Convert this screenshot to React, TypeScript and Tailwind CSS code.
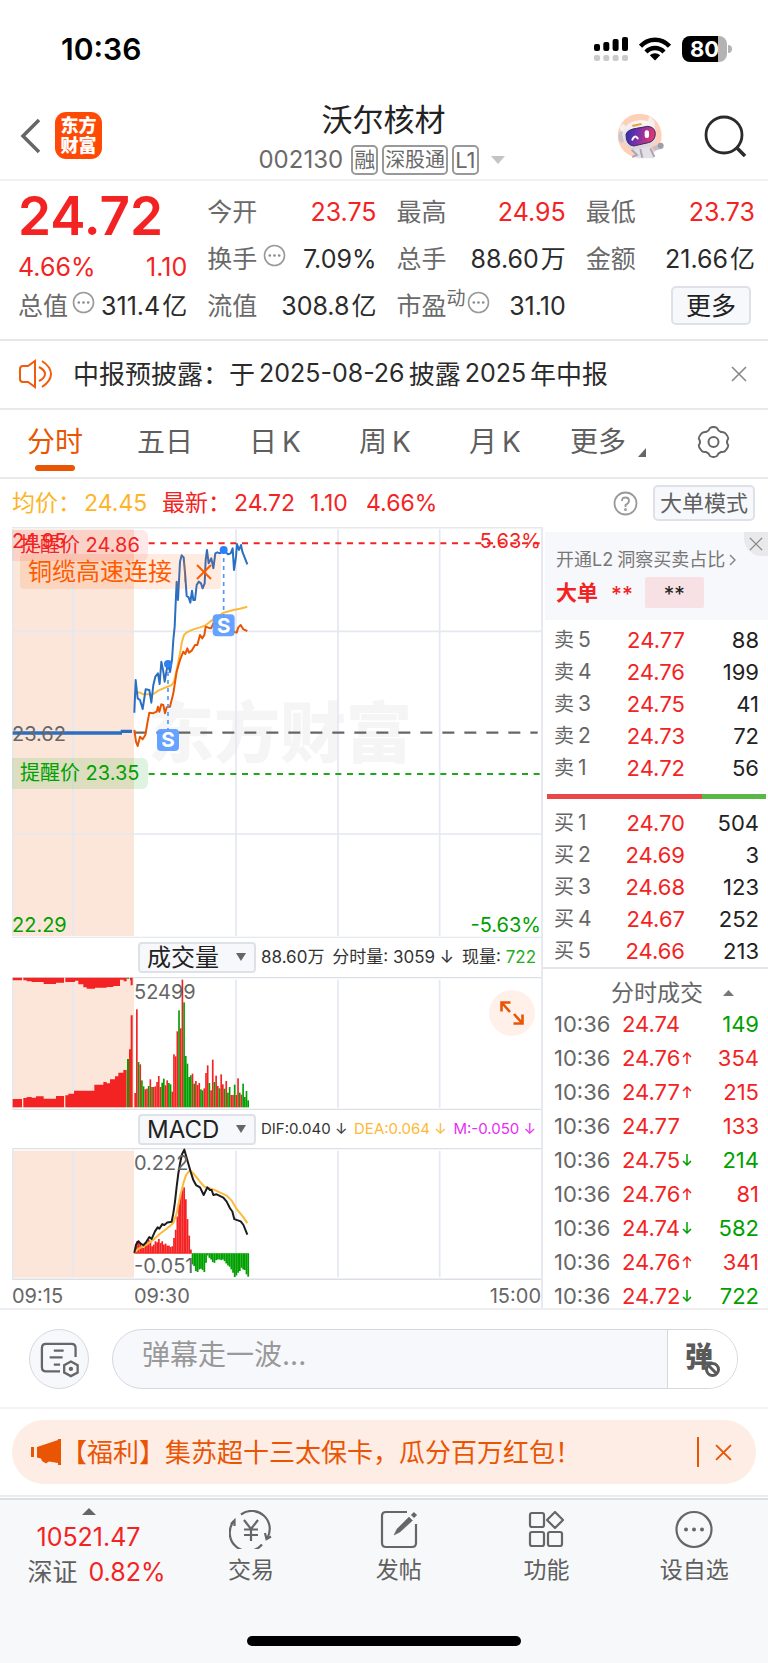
import React from "react";

const RED = "#f42323";
const GREEN = "#00a000";

function Dots() {
  return (
    <svg className="size-[23px] shrink-0" viewBox="0 0 23 23" fill="none" stroke="#9a9a9a" strokeWidth="1.6">
      <circle cx="11.5" cy="11.5" r="10" />
      <g fill="#8a8a8a" stroke="none">
        <circle cx="6.8" cy="11.5" r="1.3" />
        <circle cx="11.5" cy="11.5" r="1.3" />
        <circle cx="16.2" cy="11.5" r="1.3" />
      </g>
    </svg>
  );
}

function Cross({ className, width = 2 }: { className: string; width?: number }) {
  return (
    <svg className={className} viewBox="0 0 16 16" fill="none" stroke="currentColor" strokeWidth={width}>
      <path d="M1 1 15 15M15 1 1 15" />
    </svg>
  );
}

function StatusBar() {
  return (
    <div className="flex h-[86px] items-center justify-between pt-3 pr-[36px] pl-[61px]">
      <span className="text-[30px] leading-9 font-semibold text-black">10:36</span>
      <div className="flex items-center gap-[11px]">
        <svg className="h-[26px] w-[34px]" viewBox="0 0 34 26">
          <g fill="#000">
            <rect x="0" y="8" width="6" height="7" rx="2" />
            <rect x="9.3" y="6" width="6" height="9" rx="2" />
            <rect x="18.6" y="3" width="6" height="12" rx="2" />
            <rect x="28" y="1" width="6" height="14" rx="2" />
          </g>
          <g fill="#cbcbcb">
            <rect x="0" y="19" width="6" height="6" rx="2" />
            <rect x="9.3" y="19" width="6" height="6" rx="2" />
            <rect x="18.6" y="19" width="6" height="6" rx="2" />
            <rect x="28" y="19" width="6" height="6" rx="2" />
          </g>
        </svg>
        <svg className="h-[24px] w-[32px]" viewBox="0 0 32 24" fill="none" stroke="#000" strokeWidth="4.4">
          <path d="M1.5 9.2C9.5 0.5 22.5 0.5 30.5 9.2" />
          <path d="M7 15C12 9.7 20 9.7 25 15" />
          <path d="M10.8 18.3C13.8 15.5 18.2 15.5 21.2 18.3L16 23.5Z" fill="#000" stroke="none" />
        </svg>
        <div className="flex items-center gap-[1px]">
          <span className="flex h-[26px] w-[45px] items-center justify-center rounded-lg bg-linear-to-r from-black from-80% to-[#b3b3b3] to-80% text-[22px] leading-none font-bold text-white">
            80
          </span>
          <span className="h-2 w-1 rounded-r-full bg-[#b3b3b3]" />
        </div>
      </div>
    </div>
  );
}

function Robot() {
  return (
    <svg className="h-[46px] w-[48px]" viewBox="0 0 144 138">
      <defs>
        <linearGradient id="visor" x1="0" y1="0.3" x2="1" y2="0.5">
          <stop offset="0" stopColor="#2b2fb0" />
          <stop offset="0.45" stopColor="#8130a8" />
          <stop offset="1" stopColor="#ea3a6a" />
        </linearGradient>
        <linearGradient id="shell" x1="0" y1="0" x2="0" y2="1">
          <stop offset="0" stopColor="#fbf8f8" />
          <stop offset="1" stopColor="#d6d3da" />
        </linearGradient>
      </defs>
      <circle cx="68" cy="68" r="66" fill="#ffd0b8" />
      <path d="M48 104Q72 94 104 104L110 136H58Z" fill="#e3e1e7" />
      <path d="M44 110 60 126 46 132M70 108 76 134M100 106 112 132" stroke="#aaa6b2" strokeWidth="6" fill="none" />
      <path d="M104 102 130 92 138 106 112 114Z" fill="#c3c0ca" />
      <circle cx="131" cy="98" r="9" fill="#9f9cab" />
      <path d="M6 40 20 32 32 48 16 64ZM92 26 98 8 112 24 114 44Z" fill="#f4f0f0" />
      <ellipse cx="14" cy="72" rx="10" ry="17" fill="#c9c6ce" />
      <path d="M16 64Q22 28 66 22Q110 18 118 62Q122 92 94 102L50 110Q20 104 16 64Z" fill="url(#shell)" />
      <path d="M44 36 72 30 76 35 48 42Z" fill="#e9a24a" />
      <path d="M27 64Q31 50 58 46L92 40Q114 42 115 62Q114 85 94 89L50 99Q26 96 27 64Z" fill="url(#visor)" stroke="#40265e" strokeWidth="3" />
      <path d="M46 80Q53 64 62 76" fill="none" stroke="#fff" strokeWidth="6" strokeLinecap="round" />
      <rect x="83" y="52" width="13" height="23" rx="6" fill="#fff" />
    </svg>
  );
}

function Header() {
  return (
    <header className="flex h-[93px] items-center justify-between pr-[21px] pl-5">
      <div className="flex w-[160px] items-center gap-[14px] pt-[6px]">
        <button aria-label="返回">
          <svg className="h-[36px] w-[21px]" viewBox="0 0 21 36" fill="none" stroke="#666" strokeWidth="3.5">
            <path d="M19 2 3 18 19 34" />
          </svg>
        </button>
        <a href="#home" className="flex size-[47px] flex-col items-center justify-center rounded-[11px] bg-[#ff4a06] text-[18px] leading-5 font-black text-white">
          <span>东方</span>
          <span>财富</span>
        </a>
      </div>
      <div className="flex flex-col items-center gap-[7px] pt-[11px]">
        <h1 className="text-[31px] leading-9 text-[#222]">沃尔核材</h1>
        <div className="flex items-center gap-1 pr-1 text-[22px] leading-7 text-[#6a6a6a]">
          <span className="pr-1 text-[24px]">002130</span>
          <span className="rounded-[5px] border-2 border-[#999] px-px text-[21px] leading-[26px]">融</span>
          <span className="rounded-[5px] border-2 border-[#999] px-px text-[20px] leading-[26px]">深股通</span>
          <span className="rounded-[5px] border-2 border-[#999] px-px leading-[26px]">L1</span>
          <svg className="ml-2 h-2 w-[14px]" viewBox="0 0 14 8" fill="#c4c4c4">
            <path d="M0 0H14L7 8Z" />
          </svg>
        </div>
      </div>
      <div className="flex w-[160px] items-center justify-end gap-[38px] pt-[6px]">
        <button aria-label="助手">
          <Robot />
        </button>
        <button aria-label="搜索">
          <svg className="h-[42px] w-[44px]" viewBox="0 0 44 42" fill="none" stroke="#2b2b2b" strokeWidth="2.8">
            <circle cx="21" cy="20" r="18" />
            <path d="M33.5 32.5 42 41" strokeWidth="3.5" />
          </svg>
        </button>
      </div>
    </header>
  );
}

function Stat({ label, value, red, extra }: { label: string; value: string; red?: boolean; extra?: React.ReactNode }) {
  return (
    <div className="flex h-[47px] items-center justify-between">
      <dt className="flex items-center text-[25px] whitespace-nowrap text-[#6a6a6a]">
        {label}
        {extra}
      </dt>
      <dd className={`flex items-center gap-[2px] text-[25px] whitespace-nowrap ${red ? "text-[#f42323]" : "text-[#2b2b2b]"}`}>
        {value.replace(/[万亿]/, "")}
        {/[万亿]/.test(value) && <span>{value.slice(-1)}</span>}
      </dd>
    </div>
  );
}

function Quote() {
  return (
    <section className="grid grid-cols-4 gap-x-5 border-t-2 border-[#f1f1f1] pt-2 pr-[13px] pb-[9px] pl-[18px]">
      <div>
        <div className="h-[57px] text-[53px] leading-[55px] font-semibold text-[#f42323]">24.72</div>
        <div className="flex h-[37px] items-end justify-between text-[25px] leading-[32px] text-[#f42323]">
          <span>4.66%</span>
          <span>1.10</span>
        </div>
        <dl>
          <Stat label="总值" value="311.4亿" extra={<span className="ml-1 pb-2"><Dots /></span>} />
        </dl>
      </div>
      <dl>
        <Stat label="今开" value="23.75" red />
        <Stat label="换手" value="7.09%" extra={<span className="ml-[6px] pb-2"><Dots /></span>} />
        <Stat label="流值" value="308.8亿" />
      </dl>
      <dl>
        <Stat label="最高" value="24.95" red />
        <Stat label="总手" value="88.60万" />
        <Stat
          label="市盈"
          value="31.10"
          extra={
            <span className="flex items-center gap-px pb-2 text-[19px]">
              <span className="pb-2 leading-5">动</span>
              <Dots />
            </span>
          }
        />
      </dl>
      <div>
        <dl>
          <Stat label="最低" value="23.73" red />
          <Stat label="金额" value="21.66亿" />
        </dl>
        <div className="flex h-[45px] items-center justify-end pr-1">
          <button className="h-[39px] w-20 rounded-[5px] border-2 border-[#dfe1e8] bg-[#f7f8fb] text-[25px] leading-8 text-[#222]">更多</button>
        </div>
      </div>
    </section>
  );
}

function Notice() {
  return (
    <section className="flex h-[69px] items-center border-t-2 border-[#e6e6e6] pr-[21px] pb-px pl-[19px]">
      <svg className="h-[30px] w-[34px]" viewBox="0 0 34 30" fill="none" stroke="#f25a0c" strokeWidth="2">
        <path d="M16 2V28L9 23H4Q1 23 1 20V10Q1 7 4 7H9Z" />
        <path d="M20 8Q26 11 26 15T20 22M23 2Q32 8 32 15T23 28" />
      </svg>
      <p className="ml-[20px] flex flex-1 items-center gap-1 text-[26px] whitespace-nowrap text-[#2b2b2b]">
        <span>中报预披露：于</span>
        <span className="text-[25px]">2025-08-26</span>
        <span>披露</span>
        <span className="text-[25px]">2025</span>
        <span>年中报</span>
      </p>
      <button aria-label="关闭公告" className="text-[#888]">
        <Cross className="size-4" width={1.6} />
      </button>
    </section>
  );
}

function Tabs() {
  return (
    <nav className="grid h-[71px] grid-cols-[repeat(5,110fr)_116fr_94fr] items-center justify-items-center border-t-2 border-b-2 border-[#e9e9ed] pr-2 pb-[3px] text-[28px] text-[#5f5f5f]">
      <button className="relative text-[#ea5504]">
        分时
        <span className="absolute -bottom-[8px] left-2 h-[6px] w-10 rounded-full bg-[#ea5504]" />
      </button>
      <button>五日</button>
      <button className="flex items-center gap-[5px]">日<span>K</span></button>
      <button className="flex items-center gap-[5px]">周<span>K</span></button>
      <button className="flex items-center gap-[5px]">月<span>K</span></button>
      <button className="flex items-center gap-3">
        更多
        <svg className="mt-5 h-[9px] w-2" viewBox="0 0 8 9" fill="#666">
          <path d="M8 0V9H0Z" />
        </svg>
      </button>
      <button aria-label="设置">
        <svg className="h-[32px] w-[33px]" viewBox="0 0 33 32" fill="none" stroke="#666" strokeWidth="2" strokeLinejoin="round">
          <path d="M13 2Q16.500 0 20 2Q21 5 24 6Q27.500 5.500 29 8Q32 12 31 13Q29 16 31 19Q32 20 29 24Q27.500 26.500 24 26Q21 27 20 30Q16.500 32 13 30Q12 27 9 26Q5.500 26.500 4 24Q1 20 2 19Q4 16 2 13Q1 12 4 8Q5.500 5.500 9 6Q12 5 13 2Z" />
          <circle cx="16.5" cy="16" r="5" />
        </svg>
      </button>
    </nav>
  );
}

function PriceSummary() {
  return (
    <div className="flex h-[48px] items-center pr-[13px] pl-3 text-[23px] text-[#f42323]">
      <span className="text-[#fdb528]">均价：</span>
      <span className="w-[81px] pl-[3px] text-[#fdb528]">24.45</span>
      <span>最新：</span>
      <span className="w-[79px] pl-[3px]">24.72</span>
      <span className="w-[56px]">1.10</span>
      <span className="flex-1">4.66%</span>
      <svg className="mr-[15px] size-[25px]" viewBox="0 0 25 25" fill="none" stroke="#999" strokeWidth="1.8">
        <circle cx="12.5" cy="12.5" r="11" />
        <path d="M9 10Q9 6.500 12.5 6.500T16 10Q16 12 12.5 14V16" />
        <circle cx="12.5" cy="18.5" r="0.6" />
      </svg>
      <button className="h-9 w-[102px] rounded-[5px] border-2 border-[#dfe1e8] bg-[#f7f8fb] text-[22px] leading-8 whitespace-nowrap text-[#5f5f5f]">大单模式</button>
    </div>
  );
}

const blueLine =
  "403,578 407,480 413,535 420,540 428,567 437,508 448,510 454,548 460,495 466,470 474,460 479,492 484,425 490,455 494,485 500,450 504,432 510,456 516,420 520,360 524,320 527,250 530,185 534,240 540,125 545,106 551,112 556,170 560,228 566,232 571,248 576,212 580,240 585,240 590,195 596,185 603,190 608,205 614,190 617,120 621,90 626,130 634,115 640,145 646,100 652,97 660,100 671,90 684,103 692,100 698,85 702,150 708,110 711,72 717,90 723,75 727,95 735,115 742,133";
const averageLine =
  "408,515 420,518 430,523 445,523 460,522 475,512 490,505 515,495 522,485 530,450 540,400 546,365 552,345 560,337 580,328 600,322 615,317 630,305 645,295 671,278 700,270 720,266 742,260";
const indexLine =
  "403,630 408,665 413,678 420,650 428,658 436,645 442,610 448,578 458,580 470,575 474,560 478,575 484,553 490,555 495,580 500,562 510,560 520,520 530,455 540,420 550,395 556,402 562,385 567,398 575,392 585,375 592,375 600,345 607,355 613,345 617,320 625,323 633,325 640,310 650,310 680,325 690,330 700,335 710,338 715,322 722,315 730,328 742,333";

function SellMark({ x, y, from }: { x: number; y: number; from: number }) {
  return (
    <g>
      <path d={`M${x} ${from}V${y}`} stroke="#4f97ff" strokeWidth="5" strokeDasharray="12 12" />
      <circle cx={x} cy={from} r="12" fill="#2d80f5" />
      <rect x={x - 33} y={y - 33} width="66" height="66" rx="12" fill="#5e9dff" fillOpacity="0.95" />
      <text x={x} y={y + 22} textAnchor="middle" fontSize="62" fontWeight="700" fill="#fff">
        S
      </text>
    </g>
  );
}

function PriceChart() {
  return (
    <div className="relative h-[411px] text-[20px] leading-6">
      <span className="absolute top-[166px] left-[136px] text-[66px] leading-[80px] font-black whitespace-nowrap text-[#f5f5f5]">东方财富</span>
      <svg className="absolute inset-0 size-full" viewBox="36 21 1587 1233" preserveAspectRatio="none" fill="none">
        <rect x="36" y="28" width="366" height="1220" fill="#fce6da" />
        <g stroke="#e4e8ef" strokeWidth="5">
          <path d="M36 23H1623M36 334H1623M36 942H1623M36 1253H1623" />
          <path d="M38 28V1248M219 28V1248M708 28V1248M1014 28V1248M1319 28V1248" />
        </g>
        <path d="M403 638H1613" stroke="#666" strokeWidth="7" strokeDasharray="36 30" />
        <path d="M446 70H1623" stroke="#f42323" strokeWidth="6" strokeDasharray="18 17" />
        <path d="M446 762H1623" stroke="#1fa81f" strokeWidth="6" strokeDasharray="18 17" />
        <path d="M38 639H366M362 634H396" stroke="#2b6fc0" strokeWidth="10" />
        <g strokeWidth="6" strokeLinejoin="round">
          <polyline points={averageLine} stroke="#fdb938" />
          <polyline points={blueLine} stroke="#2b6fc0" />
          <polyline points={indexLine} stroke="#ea5504" />
        </g>
        <SellMark x={504} y={660} from={432} />
        <SellMark x={671} y={316} from={90} />
      </svg>
      <span className="absolute top-[2px] left-0 text-[#f42323]">24.95</span>
      <span className="absolute top-[2px] right-0 text-[#f42323]">5.63%</span>
      <span className="absolute top-[195px] left-0 text-[#666]">23.62</span>
      <span className="absolute bottom-px left-0 text-[#00a000]">22.29</span>
      <span className="absolute right-0 bottom-px text-[#00a000]">-5.63%</span>
      <span className="absolute top-[3px] left-0 h-[31px] w-[136px] rounded-r-md bg-[#f42323]/10 pl-2 leading-[31px] whitespace-nowrap text-[#f42323]">提醒价 24.86</span>
      <span className="absolute top-[231px] left-0 h-[31px] w-[136px] rounded-r-md bg-[#00a000]/12 pl-2 leading-[31px] whitespace-nowrap text-[#00a000]">提醒价 23.35</span>
      <div className="absolute top-[27px] left-2 flex h-[35px] w-[201px] items-center rounded-[4px] bg-[#ff5a00]/12 pl-2 text-[24px] whitespace-nowrap text-[#ff5a00]">
        铜缆高速连接
        <span className="ml-3 h-5 w-px bg-[#ff5a00]/50" />
        <button aria-label="移除标签" className="ml-[11px]">
          <Cross className="size-4" />
        </button>
      </div>
    </div>
  );
}

const volumeTops: [number, 0 | 1][] = [
  [488, 1], [237, 1], [395, 0], [402, 1], [450, 0], [468, 0], [477, 1], [475, 1], [467, 0], [447, 1], [470, 0], [470, 1],
  [468, 1], [455, 1], [437, 1], [470, 1], [457, 0], [445, 0], [465, 1], [450, 1], [458, 0], [462, 0], [484, 1], [372, 1],
  [378, 1], [303, 1], [240, 0], [294, 1], [148, 1], [216, 0], [377, 0], [400, 0], [440, 0], [435, 0], [430, 1], [460, 0],
  [452, 1], [464, 1], [458, 1], [477, 0], [480, 0], [474, 1], [428, 1], [405, 1], [458, 0], [480, 1], [388, 1], [455, 0],
  [436, 1], [467, 1], [474, 0], [432, 1], [462, 1], [475, 0], [452, 1], [487, 0], [470, 0], [494, 1], [494, 1], [463, 0],
  [494, 1], [444, 1], [487, 0], [493, 1], [460, 0], [500, 0], [482, 0], [510, 0],
];

function Grid({ top, bottom, shade }: { top: number; bottom: number; shade: number }) {
  return (
    <g>
      <rect x="36" y={shade} width="366" height={bottom - shade - 6} fill="#fce6da" />
      <g stroke="#e4e8ef" strokeWidth="5">
        <path d={`M36 ${top + 1}H1623M36 ${bottom - 1}H1623`} stroke="#dcdfe5" />
        <path d={`M38 ${top}V${bottom}M219 ${top + 8}V${bottom - 7}M708 ${top + 8}V${bottom - 7}M1014 ${top + 8}V${bottom - 7}M1319 ${top + 8}V${bottom - 7}`} />
      </g>
    </g>
  );
}

function VolumeChart() {
  return (
    <div className="relative h-[133px] text-[20px] leading-6 text-[#666]">
      <svg className="absolute inset-0 size-full" viewBox="36 140 1587 399" preserveAspectRatio="none">
        <Grid top={140} bottom={539} shade={142} />
        <path
          fill={RED}
          d="M38 531V506H66V531ZM70 531V503H80V500H95V502H108V498H131V505H168V497H192V531ZM196 531V495H205V490H222V481H283V463H310V455H320V459H330V447H345V438H355V427H370V419H380V531ZM387 531V357H392V255H398V531Z"
        />
        <path fill={GREEN} d="M381 531V386H387V531ZM380 142H388V145H380Z" />
        <path
          fill={RED}
          d="M38 142H66V150H38ZM70 142H192V157H168V161H131V155H95V153H80V150H70ZM196 142H380V153H371V148H360V167H340V170H320V172H285V175H260V171H250V162H235V151H225V155H196ZM390 142H398V165H392V150H390Z"
        />
        {volumeTops.map(([top, up], i) => (
          <rect key={i} x={403 + i * 5.06} y={top} width="5" height={531 - top} fill={up ? RED : GREEN} />
        ))}
      </svg>
      <span className="absolute top-[3px] left-[122px]">52499</span>
      <button aria-label="展开" className="absolute top-[13px] right-[6px] size-[46px] rounded-full bg-[#fff1ea]">
        <svg className="size-full" viewBox="0 0 46 46" fill="none" stroke="#ea5504" strokeWidth="2.6">
          <path d="M21.5 12.5H12.5V21.5M13 13 21 22M24.5 33.5H33.5V24.5M33 33 25 24" />
        </svg>
      </button>
    </div>
  );
}

const macdUp = [
  965, 935, 933, 940, 950, 955, 948, 938, 930, 935, 950, 945, 935, 938, 928, 940, 935, 945, 942, 948, 948, 952, 950, 925,
  900, 860, 820, 790, 780, 772, 808, 868, 918, 960,
];
const macdDown = [
  1005, 1010, 1025, 1028, 1020, 1018, 1022, 1028, 1000, 978, 985, 990, 998, 1000, 992, 990, 990, 992, 990, 995, 1002,
  1008, 1012, 1020, 1030, 1043, 1038, 1030, 1025, 1015, 1020, 1022, 1035, 1042,
];

function MacdChart() {
  return (
    <div className="relative h-[132px] text-[20px] leading-6 text-[#666]">
      <svg className="absolute inset-0 size-full" viewBox="36 653 1587 399" preserveAspectRatio="none" fill="none">
        <Grid top={653} bottom={1051} shade={661} />
        {macdUp.map((top, i) => (
          <rect key={i} x={403 + i * 5.06} y={top} width="5.3" height={971 - top} fill={RED} />
        ))}
        {macdDown.map((bottom, i) => (
          <rect key={i} x={575 + i * 5.06} y={971} width="5.3" height={bottom - 971} fill={GREEN} />
        ))}
        <path d="M403 971H575" stroke={RED} strokeWidth="3" />
        <g strokeWidth="6" strokeLinejoin="round">
          <polyline
            stroke="#fdb938"
            points="403,970 415,958 440,945 460,930 480,912 500,897 520,880 530,850 540,800 550,760 558,735 570,720 580,730 600,755 613,770 640,778 680,797 695,812 710,838 730,862 742,880"
          />
          <polyline
            stroke="#1c1c1c"
            points="403,970 408,945 415,935 422,942 430,947 438,938 448,922 455,928 465,905 473,893 478,897 487,883 493,886 502,878 515,876 520,850 525,815 530,770 535,730 540,700 546,672 553,658 562,690 572,725 580,750 588,765 600,772 611,795 622,772 630,780 635,780 640,795 650,793 670,803 680,815 690,835 697,845 703,868 722,875 730,885 742,915"
          />
        </g>
      </svg>
      <span className="absolute top-[3px] left-[122px]">0.222</span>
      <span className="absolute bottom-[2px] left-[122px]">-0.051</span>
    </div>
  );
}

function IndicatorSelect({ value, label }: { value: string; label: string }) {
  return (
    <div className="relative h-[31px] w-[118px] shrink-0">
      <select aria-label={label} className="size-full appearance-none rounded-[4px] border-2 border-[#dfe1e8] bg-[#f7f8fb] pl-[7px] text-[24px] leading-[27px] text-[#222]">
        <option>{value}</option>
      </select>
      <svg className="pointer-events-none absolute top-[11px] right-[10px] h-2 w-[10px]" viewBox="0 0 10 8" fill="#666">
        <path d="M0 0H10L5 8Z" />
      </svg>
    </div>
  );
}

const asks = [["卖", "5", "24.77", "88"], ["卖", "4", "24.76", "199"], ["卖", "3", "24.75", "41"], ["卖", "2", "24.73", "72"], ["卖", "1", "24.72", "56"]];
const bids = [["买", "1", "24.70", "504"], ["买", "2", "24.69", "3"], ["买", "3", "24.68", "123"], ["买", "4", "24.67", "252"], ["买", "5", "24.66", "213"]];

function Book({ rows }: { rows: string[][] }) {
  return (
    <table className="w-full table-fixed text-[22px] leading-[30px]">
      <tbody>
        {rows.map(([side, level, price, volume]) => (
          <tr key={side + level} className="h-8">
            <td className="w-[56px] text-[#666]">
              <span className="flex h-[30px] items-center gap-1 pl-[11px]">
                <span className="text-[20px]">{side}</span>
                <span className="text-[21px]">{level}</span>
              </span>
            </td>
            <td className="text-right text-[#f42323]">{price}</td>
            <td className="w-[83px] pr-[9px] text-right text-[#222]">{volume}</td>
          </tr>
        ))}
      </tbody>
    </table>
  );
}

const trades: [string, string, boolean][] = [
  ["24.74", "149", false], ["24.76↑", "354", true], ["24.77↑", "215", true], ["24.77", "133", true], ["24.75↓", "214", false],
  ["24.76↑", "81", true], ["24.74↓", "582", false], ["24.76↑", "341", true], ["24.72↓", "722", false],
];

function Arrow({ up }: { up: boolean }) {
  return (
    <svg className="h-3 w-[10px]" viewBox="0 0 10 12" fill="none" stroke={up ? RED : GREEN} strokeWidth="1.5">
      <path d={up ? "M5 12V1M1 5 5 1 9 5" : "M5 0V11M1 7 5 11 9 7"} />
    </svg>
  );
}

function Trades() {
  return (
    <table className="-mb-2 w-full table-fixed text-[22px] leading-[32px]">
      <tbody>
        {trades.map(([price, volume, up], i) => (
          <tr key={i} className="h-[34px]">
            <td className="w-[79px] pl-[11px] text-[#666]">10:36</td>
            <td className="text-[#f42323]">
              <span className="flex items-center gap-[2px]">
                {price.slice(0, 5)}
                {price.length > 5 && <Arrow up={price.endsWith("↑")} />}
              </span>
            </td>
            <td className={`w-[60px] pr-[9px] text-right ${up ? "text-[#f42323]" : "text-[#00a000]"}`}>{volume}</td>
          </tr>
        ))}
      </tbody>
    </table>
  );
}

function SidePanel() {
  return (
    <aside className="w-[227px] shrink-0 border-l-2 border-[#e6e9ef]">
      <div className="relative mt-[5px] ml-[2px] h-[88px] bg-[#f7f8fb] pt-4 pl-[11px]">
        <a href="#level2" className="flex items-center gap-1 text-[18px] leading-6 whitespace-nowrap text-[#777]">
          <span>开通L2</span>
          <span>洞察买卖占比</span>
          <svg className="h-3 w-[7px]" viewBox="0 0 7 12" fill="none" stroke="#888" strokeWidth="1.5">
            <path d="M1 1 6 6 1 11" />
          </svg>
        </a>
        <div className="mt-[5px] flex h-[31px] items-center text-[21px]">
          <b className="text-[#f42323]">大单</b>
          <span className="ml-[13px] pt-1 font-medium text-[#f42323]">**</span>
          <span className="ml-3 flex h-[31px] w-[59px] items-center justify-center rounded-[2px] bg-[#f7e1e4] pt-1 text-[#222]">**</span>
        </div>
        <button aria-label="关闭提示" className="absolute top-0 right-0 flex size-6 items-center justify-center rounded-bl-[18px] bg-[#e9e9ec] text-[#888]">
          <Cross className="size-[14px]" width={1.6} />
        </button>
      </div>
      <div className="pt-[4px] pb-[10px]">
        <Book rows={asks} />
      </div>
      <div className="mr-[2px] ml-1 flex h-[5px]">
        <span className="w-[155px] bg-[#ea4848]" />
        <span className="flex-1 bg-[#58b947]" />
      </div>
      <div className="border-b-2 border-[#e2e4ea] pt-2">
        <Book rows={bids} />
      </div>
      <button className="flex h-[38px] w-full items-center justify-center gap-5 pt-[9px] pr-2 pl-[42px] text-[23px] leading-7 whitespace-nowrap text-[#666]">
        分时成交
        <svg className="h-[6px] w-[11px] shrink-0" viewBox="0 0 11 6" fill="#777">
          <path d="M0 6H11L5.5 0Z" />
        </svg>
      </button>
      <Trades />
    </aside>
  );
}

function Market() {
  return (
    <section className="flex border-b-2 border-[#efeff1] pl-3">
      <div className="min-w-0 flex-1">
        <PriceChart />
        <div className="flex h-[39px] items-center pl-[126px] text-[17px] whitespace-nowrap text-[#333]">
          <IndicatorSelect value="成交量" label="成交量指标" />
          <div className="ml-[5px] flex flex-1 justify-between pr-[5px]">
            <span>88.60万</span>
            <span>分时量: 3059 ↓</span>
            <span>现量: <span className="text-[#1fae1f]">722</span></span>
          </div>
        </div>
        <VolumeChart />
        <div className="flex h-[38px] items-center pl-[126px] text-[15px] whitespace-nowrap text-[#333]">
          <IndicatorSelect value="MACD" label="技术指标" />
          <div className="ml-[5px] flex flex-1 justify-between pr-[5px]">
            <span>DIF:0.040 ↓</span>
            <span className="text-[#fdb938]">DEA:0.064 ↓</span>
            <span className="text-[#e52ff0]">M:-0.050 ↓</span>
          </div>
        </div>
        <MacdChart />
        <div className="flex h-[28px] items-end text-[20px] leading-6 text-[#666]">
          <span className="w-[122px]">09:15</span>
          <span className="flex-1">09:30</span>
          <span>15:00</span>
        </div>
      </div>
      <SidePanel />
    </section>
  );
}

function Danmu() {
  return (
    <section className="flex items-center gap-[23px] pt-[19px] pr-[30px] pb-[18px] pl-[29px]">
      <button aria-label="弹幕设置" className="size-[60px] shrink-0 rounded-full border border-[#d5d8df] bg-[#f7f8fb]">
        <svg className="size-full" viewBox="0 0 56 56" fill="none" stroke="#666" strokeWidth="2.2">
          <path d="M29 40H15.5Q11.5 40 11.5 36V17.5Q11.5 13.5 15.5 13.5H40Q44 13.5 44 17.5V26" />
          <path d="M23 20H32.5M19 26.5H31.5M23 33.5H29" />
          <path d="M39.5 30.5 46 34V41L39.5 44.5 33 41V34Z" />
          <circle cx="39.5" cy="37.5" r="1" fill="#666" />
        </svg>
      </button>
      <div className="flex h-[60px] flex-1 overflow-hidden rounded-full border border-[#d5d8df] bg-[#f7f8fb]">
        <input aria-label="弹幕" placeholder="弹幕走一波..." className="min-w-0 flex-1 bg-transparent pb-2 pl-[29px] text-[28px] outline-none placeholder:text-[#999]" />
        <button aria-label="弹幕开关" className="relative w-[70px] border-l border-[#d5d8df] bg-white pr-[7px] pb-1 text-[28px] leading-[52px] font-black text-[#5a5a5a]">
          弹
          <svg className="absolute top-[31px] left-[36px] size-[17px]" viewBox="0 0 17 17" fill="#fff" stroke="#5a5a5a" strokeWidth="3">
            <circle cx="8.5" cy="8.5" r="6" />
            <path d="M4.5 4.5 12.5 12.5" />
          </svg>
        </button>
      </div>
    </section>
  );
}

function Promo() {
  return (
    <section className="border-t-2 border-[#f4f4f5] px-3 pt-[11px] pb-[11px]">
      <div className="flex h-16 items-center rounded-full bg-[#fdede5] pr-[24px] pl-[19px] text-[#ea5504]">
        <svg className="h-[26px] w-[30px]" viewBox="0 0 30 26" fill="#ea5504">
          <path d="M0 8H3V18H0ZM6 8 27 1V0H30V26H27V24L18 22.5 15 24.5 11 22 10 19.5 6 18.5Z" />
        </svg>
        <p className="flex-1 text-[26px] whitespace-nowrap">【福利】集苏超十三太保卡，瓜分百万红包！</p>
        <span className="mr-4 h-[30px] w-[2px] bg-[#ea5504]" />
        <button aria-label="关闭活动">
          <Cross className="size-[17px]" width={1.8} />
        </button>
      </div>
    </section>
  );
}

function NavItem({ label, children }: { label: string; children: React.ReactNode }) {
  return (
    <button className="flex flex-1 flex-col items-center gap-[3px] pt-px text-[23px] leading-9 text-[#5f5f5f]">
      <svg className="h-[39px] w-[44px]" viewBox="0 0 44 39" fill="none" stroke="#666" strokeWidth="2.2">
        {children}
      </svg>
      {label}
    </button>
  );
}

function BottomNav() {
  return (
    <footer className="border-t-2 border-[#dedfe3] bg-[#f7f8fa]">
      <div className="flex h-[136px] items-start pt-[9px]">
        <a href="#index" className="flex w-[177px] flex-col items-center text-[25px] text-[#f42323]">
          <svg className="-mt-px h-[7px] w-[14px]" viewBox="0 0 14 7" fill="#666">
            <path d="M0 7H14L7 0Z" />
          </svg>
          <span className="pt-1 leading-[37px]">10521.47</span>
          <span className="flex items-center gap-[11px] pl-4 leading-[32px]">
            <span className="text-[#5f5f5f]">深证</span>
            0.82%
          </span>
        </a>
        <NavItem label="交易">
          <path d="M12 4.5A18 18 0 0 1 38 28.5M33 34.5A18 18 0 0 1 5 11" />
          <path d="M2 14 5.5 10.5V16M36 23 37.5 29 42 26.5" />
          <path d="M15 10 22 19 29 10M15 19.5H29M15 25H29M22 19V31" />
        </NavItem>
        <NavItem label="发帖">
          <path d="M30 2H9Q5 2 5 6V33Q5 37 9 37H35Q39 37 39 33V14" />
          <path d="M17 25 20 19 32 7 35.500 10.500 23 22Z" fill="#666" strokeWidth="0.5" />
          <path d="M35.500 6.500 38.500 3.500" strokeWidth="4.5" />
        </NavItem>
        <NavItem label="功能">
          <rect x="6" y="3" width="14" height="14" rx="2" />
          <rect x="6" y="22" width="14" height="14" rx="2" />
          <rect x="24" y="22" width="14" height="14" rx="2" />
          <path d="M31 2 39 10 31 18 23 10Z" strokeLinejoin="round" />
        </NavItem>
        <NavItem label="设自选">
          <circle cx="22" cy="19.5" r="17.5" />
          <g fill="#666" stroke="none">
            <circle cx="14" cy="19.5" r="2" />
            <circle cx="22" cy="19.5" r="2" />
            <circle cx="30" cy="19.5" r="2" />
          </g>
        </NavItem>
      </div>
      <div className="flex h-[27px] justify-center">
        <span className="h-[10px] w-[274px] rounded-full bg-black" />
      </div>
    </footer>
  );
}

export default function App() {
  return (
    <main className="min-h-screen bg-white font-['Inter','Noto_Sans_CJK_SC',sans-serif]">
      <StatusBar />
      <Header />
      <Quote />
      <Notice />
      <Tabs />
      <PriceSummary />
      <Market />
      <Danmu />
      <Promo />
      <div className="h-[3px] border-t-2 border-[#ececee]" />
      <BottomNav />
    </main>
  );
}
